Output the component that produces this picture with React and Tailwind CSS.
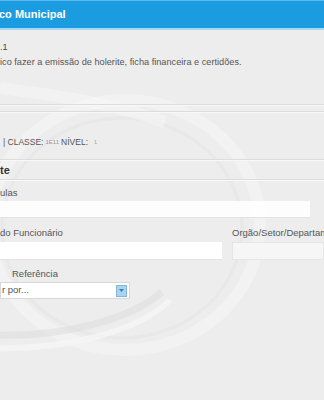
import React from 'react';

const Watermark = () => (
  <svg className="absolute inset-0 pointer-events-none" width="324" height="400" viewBox="0 0 324 400">
    <ellipse cx="125" cy="225" rx="135" ry="125" fill="none" stroke="#ffffff" strokeWidth="12" opacity="0.3" />
    <ellipse cx="122" cy="228" rx="120" ry="110" fill="none" stroke="#e2e2e2" strokeWidth="3" opacity="0.45" />
    <path d="M-10 335 C 60 338, 130 320, 162 292" fill="none" stroke="#dcdcdc" strokeWidth="7" opacity="0.5" />
    <path d="M-10 348 C 70 350, 140 330, 170 300" fill="none" stroke="#f7f7f7" strokeWidth="6" opacity="0.7" />
    <path d="M0 88 C 50 95, 110 102, 165 122" fill="none" stroke="#f8f8f8" strokeWidth="12" opacity="0.5" />
  </svg>
);

const Rule = () => (
  <div className="h-[2px] border-t border-[#dcdcdc] bg-[#f8f8f8]" />
);

export default function App() {
  return (
    <div className="relative w-[324px] h-[400px] overflow-hidden bg-[#ededed] font-['Liberation_Sans',Arial,sans-serif] text-[#555]">
      <Watermark />
      <div className="relative">
        {/* barra do título */}
        <div className="h-[30px] bg-[#1b9ce0] border-t border-[#5fb9ec] border-b-2 border-b-[#a7d8f3] flex items-center">
          <span className="-ml-[1px] text-[11px] font-bold text-white">co Municipal</span>
        </div>

        <div className="pt-[11px] text-[9px] leading-[12px] text-[#444]">.1</div>
        <div className="mt-[3px] text-[9.2px] leading-[12px] text-[#555] whitespace-nowrap">
          ico fazer a emissão de holerite, ficha financeira e certidões.
        </div>

        <div className="mt-[36px] flex flex-col gap-[5px]">
          <Rule />
          <Rule />
        </div>

        <div className="h-[46px] flex items-center pt-[12px] pl-[3px] text-[8.5px] text-[#555]">
          <span>| CLASSE:</span>
          <span className="mx-[2px] text-[6px] text-[#999] blur-[0.6px]">1E11</span>
          <span>NÍVEL:</span>
          <span className="ml-[6px] text-[6px] text-[#aaa] blur-[0.6px]">1</span>
        </div>

        <Rule />
        <div className="h-[18px] flex items-center text-[11px] font-bold text-[#333]">te</div>
        <Rule />

        <div className="pt-[6px] text-[9.5px] leading-[11px] text-[#555]">ulas</div>
        <div className="mt-[3px] h-[17px] w-[310px] bg-white/90 border-b border-[#e3e3e3]" />

        <div className="mt-[9px] flex gap-[10px]">
          <div className="w-[222px] shrink-0 flex flex-col">
            <div className="text-[9.5px] leading-[12px] text-[#555]">do Funcionário</div>
            <div className="mt-[3px] h-[18px] bg-white border-b border-[#e3e3e3]" />
          </div>
          <div className="flex-1 min-w-0 flex flex-col">
            <div className="text-[9.5px] leading-[12px] text-[#555] whitespace-nowrap">Orgão/Setor/Departamento</div>
            <div className="mt-[3px] h-[18px] bg-[#f6f6f6] border border-[#e5e5e5]" />
          </div>
        </div>

        <div className="mt-[8px] pl-[12px] text-[9.5px] leading-[12px] text-[#555]">Referência</div>
        <div className="mt-[2px] w-[130px] h-[17px] bg-white border border-[#d8d8d8] flex items-center justify-between pr-[2px]">
          <span className="pl-[1px] text-[9.5px] text-[#555]">r por...</span>
          <span className="w-[11px] h-[12px] bg-[#a9d3ee] border border-[#7fb7dd] flex items-center justify-center">
            <svg width="5" height="3" viewBox="0 0 5 3"><path d="M0 0 L5 0 L2.5 3 Z" fill="#3b7fb3" /></svg>
          </span>
        </div>
      </div>
    </div>
  );
}
